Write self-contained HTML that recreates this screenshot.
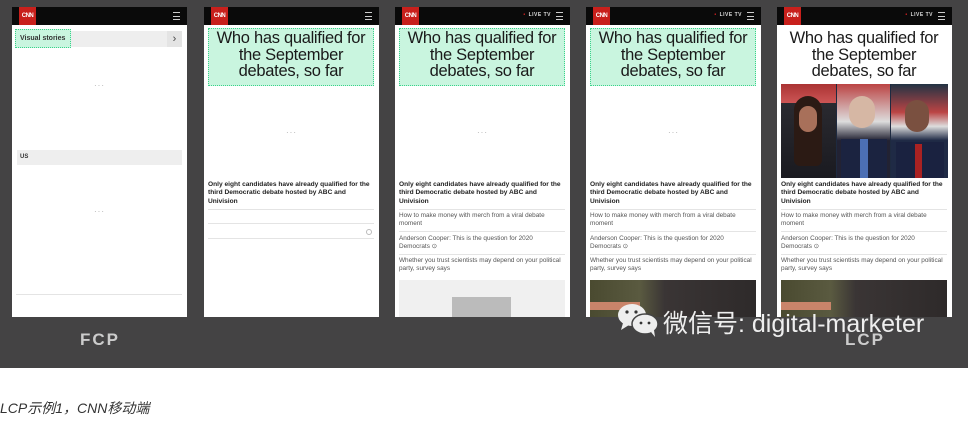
<!DOCTYPE html>
<html><head><meta charset="utf-8"><style>
*{margin:0;padding:0;box-sizing:border-box}
body{width:978px;height:440px;background:#fff;position:relative;overflow:hidden;font-family:"Liberation Sans",Arial,sans-serif}
#bg{position:absolute;left:0;top:0;width:968px;height:368px;background:#444344}
.p{position:absolute;top:7px;width:175px;height:310px;background:#fff;overflow:hidden}
.hd{position:absolute;left:0;top:0;width:100%;height:18px;background:#0a0a0a}
.logo{position:absolute;left:7px;top:0;width:17px;height:18px;background:#c8201c;color:#fff;font-size:6px;font-weight:bold;text-align:center;line-height:18px;letter-spacing:-.5px}
.menu{position:absolute;right:7px;top:5px;width:7px;height:8px;border-top:1px solid #ccc;border-bottom:1px solid #ccc}
.menu:after{content:"";position:absolute;left:0;top:2.5px;width:7px;height:1px;background:#ccc}
.live{position:absolute;right:19px;top:5px;color:#ddd;font-size:5px;font-weight:bold;letter-spacing:.5px}
.live:before{content:"•";color:#d22;margin-right:3px}
.h1{position:absolute;left:4px;top:21px;width:166px;height:58px;font-size:16.5px;line-height:16.5px;text-align:center;color:#1a1a1a;padding-top:2px;letter-spacing:-.3px;white-space:nowrap}
.g{background:#c9f5df;outline:1.5px dotted #3ad38a;outline-offset:-1px}
.dots{position:absolute;left:0;width:100%;text-align:center;color:#aaa;font-size:8px;letter-spacing:1px}
.b{position:absolute;left:4px;top:174px;width:166px;font-size:6.6px;font-weight:bold;line-height:8.3px;color:#222}
.ln{position:absolute;left:4px;width:166px;height:1px;background:#e4e4e4}
.it{position:absolute;left:4px;width:166px;font-size:6.4px;line-height:8.2px;color:#555}
.img{position:absolute;left:4px;top:273px;width:166px;height:40px}
</style></head><body>
<div id="bg"></div>

<div class="p" style="left:12px">
<div class="hd"><div class="logo">CNN</div><div class="menu"></div></div>
<div style="position:absolute;left:4px;top:24px;width:166px;height:16px;background:#eee"></div>
<div class="g" style="position:absolute;left:3px;top:22px;width:56px;height:19px;font-size:7px;line-height:19px;padding-left:5px;color:#333;font-weight:bold">Visual stories</div>
<div style="position:absolute;left:155px;top:24px;width:15px;height:16px;background:#e4e4e4;color:#444;font-size:11px;text-align:center;line-height:16px">›</div>
<div class="dots" style="top:74px">···</div>
<div style="position:absolute;left:5px;top:143px;width:165px;height:15px;background:#eee;font-size:6px;font-weight:bold;line-height:15px;padding-left:3px;color:#333">US</div>
<div class="dots" style="top:200px">···</div>
<div class="ln" style="top:287px"></div>
</div>

<div class="p" style="left:204px">
<div class="hd"><div class="logo">CNN</div><div class="menu"></div></div>
<div class="h1 g">Who has qualified for<br>the September<br>debates, so far</div>
<div class="dots" style="top:121px">···</div>
<div class="b">Only eight candidates have already qualified for the third Democratic debate hosted by ABC and Univision</div>
<div class="ln" style="top:202px"></div>
<div class="ln" style="top:216px"></div>
<div style="position:absolute;left:162px;top:222px;width:6px;height:6px;border:1px solid #bbb;border-radius:50%"></div>
<div class="ln" style="top:231px"></div>
</div>

<div class="p" style="left:395px">
<div class="hd"><div class="logo">CNN</div><div class="live">LIVE TV</div><div class="menu"></div></div>
<div class="h1 g">Who has qualified for<br>the September<br>debates, so far</div>
<div class="dots" style="top:121px">···</div>
<div class="b">Only eight candidates have already qualified for the third Democratic debate hosted by ABC and Univision</div>
<div class="ln" style="top:202px"></div>
<div class="it" style="top:205px">How to make money with merch from a viral debate moment</div>
<div class="ln" style="top:224px"></div>
<div class="it" style="top:228px">Anderson Cooper: This is the question for 2020 Democrats ⊙</div>
<div class="ln" style="top:247px"></div>
<div class="it" style="top:250px">Whether you trust scientists may depend on your political party, survey says</div>
<div class="img" style="background:#f0f0f0"><div style="position:absolute;left:53px;top:17px;width:59px;height:25px;background:#bbb"></div></div>
</div>

<div class="p" style="left:586px">
<div class="hd"><div class="logo">CNN</div><div class="live">LIVE TV</div><div class="menu"></div></div>
<div class="h1 g">Who has qualified for<br>the September<br>debates, so far</div>
<div class="dots" style="top:121px">···</div>
<div class="b">Only eight candidates have already qualified for the third Democratic debate hosted by ABC and Univision</div>
<div class="ln" style="top:202px"></div>
<div class="it" style="top:205px">How to make money with merch from a viral debate moment</div>
<div class="ln" style="top:224px"></div>
<div class="it" style="top:228px">Anderson Cooper: This is the question for 2020 Democrats ⊙</div>
<div class="ln" style="top:247px"></div>
<div class="it" style="top:250px">Whether you trust scientists may depend on your political party, survey says</div>
<div class="img" style="background:linear-gradient(90deg,#4a4a30 0,#5a5a40 30%,#3a3535 45%,#2e2a2a 100%)"><div style="position:absolute;left:0;top:22px;width:50px;height:8px;background:#c9846a"></div></div>
</div>

<div class="p" style="left:777px">
<div class="hd"><div class="logo">CNN</div><div class="live">LIVE TV</div><div class="menu"></div></div>
<div class="h1">Who has qualified for<br>the September<br>debates, so far</div>
<div class="g" style="position:absolute;left:4px;top:77px;width:167px;height:94px;background:#1e2a40;overflow:hidden">
<div style="position:absolute;left:0;top:0;width:55px;height:94px;background:linear-gradient(180deg,#a33 0,#c55 20%,#2a2a30 20%,#1a1a20 100%)"></div>
<div style="position:absolute;left:13px;top:12px;width:28px;height:70px;border-radius:14px 14px 6px 6px;background:#2b1a14"></div>
<div style="position:absolute;left:18px;top:22px;width:18px;height:26px;border-radius:9px;background:#a8705a"></div>
<div style="position:absolute;left:56px;top:0;width:53px;height:94px;background:linear-gradient(180deg,#b44 0,#ddd 40%,#223 60%)"></div>
<div style="position:absolute;left:68px;top:12px;width:26px;height:32px;border-radius:13px;background:#d6b7a4"></div>
<div style="position:absolute;left:60px;top:55px;width:46px;height:39px;background:#1b2340"></div>
<div style="position:absolute;left:79px;top:55px;width:8px;height:39px;background:#4c6fb4"></div>
<div style="position:absolute;left:110px;top:0;width:57px;height:94px;background:linear-gradient(180deg,#234 0,#b44 30%,#ddd 45%,#1f2a45 60%)"></div>
<div style="position:absolute;left:124px;top:16px;width:24px;height:32px;border-radius:12px;background:#7a5040"></div>
<div style="position:absolute;left:115px;top:58px;width:48px;height:36px;background:#1a2240"></div>
<div style="position:absolute;left:134px;top:60px;width:7px;height:34px;background:#a22"></div>
</div>
<div class="b">Only eight candidates have already qualified for the third Democratic debate hosted by ABC and Univision</div>
<div class="ln" style="top:202px"></div>
<div class="it" style="top:205px">How to make money with merch from a viral debate moment</div>
<div class="ln" style="top:224px"></div>
<div class="it" style="top:228px">Anderson Cooper: This is the question for 2020 Democrats ⊙</div>
<div class="ln" style="top:247px"></div>
<div class="it" style="top:250px">Whether you trust scientists may depend on your political party, survey says</div>
<div class="img" style="background:linear-gradient(90deg,#4a4a30 0,#5a5a40 30%,#3a3535 45%,#2e2a2a 100%)"><div style="position:absolute;left:0;top:22px;width:50px;height:8px;background:#c9846a"></div></div>
</div>

<div style="position:absolute;left:80px;top:330px;color:#ccc;font-size:17px;font-weight:bold;letter-spacing:2px">FCP</div>
<div style="position:absolute;left:845px;top:330px;color:#ccc;font-size:17px;font-weight:bold;letter-spacing:2px">LCP</div>

<svg style="position:absolute;left:617px;top:302px" width="44" height="36" viewBox="0 0 44 36">
<ellipse cx="15" cy="13" rx="14" ry="11" fill="#eee"/><path d="M6 21 L4 28 L12 23Z" fill="#eee"/>
<ellipse cx="28" cy="22" rx="13" ry="10" fill="#eee" stroke="#444" stroke-width="1.5"/><path d="M34 30 L38 35 L37 28Z" fill="#eee"/>
<circle cx="10" cy="10" r="1.6" fill="#333"/><circle cx="19" cy="10" r="1.6" fill="#333"/>
<circle cx="24" cy="21" r="1.4" fill="#333"/><circle cx="32" cy="21" r="1.4" fill="#333"/>
</svg>
<div style="position:absolute;left:663px;top:304px;color:#eee;font-size:25px;font-family:'Liberation Sans','Noto Sans CJK SC',sans-serif;white-space:nowrap">微信号: digital-marketer</div>

<div style="position:absolute;left:0;top:398px;font-size:14px;font-style:italic;color:#333;font-family:'Liberation Sans','Noto Sans CJK SC',sans-serif">LCP示例1，CNN移动端</div>
</body></html>
